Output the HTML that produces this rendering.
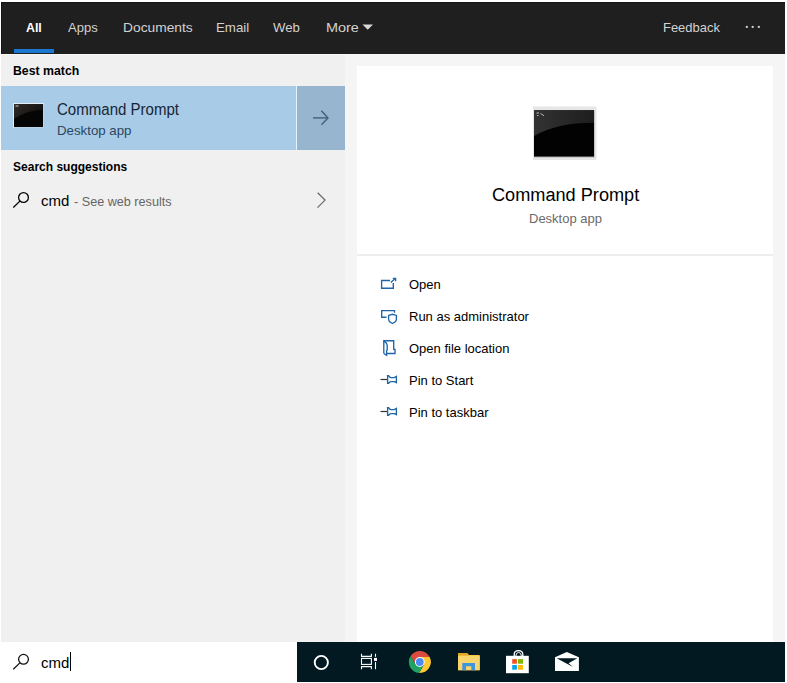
<!DOCTYPE html>
<html><head><meta charset="utf-8">
<style>
*{margin:0;padding:0;box-sizing:border-box}
html,body{width:787px;height:683px;overflow:hidden;background:#fff;font-family:"Liberation Sans",sans-serif}
.abs{position:absolute}
.t{position:absolute;white-space:nowrap;line-height:1;transform-origin:0 0}
.tab{font-size:13px;color:#d2d2d2}
</style></head><body>
<div class="abs" style="left:1px;top:2px;width:784px;height:52px;background:#1f1f1f"></div>
<div class="abs" style="left:1px;top:2px;width:784px;height:1px;background:#141414"></div>
<div class="abs" style="left:1px;top:2px;width:1px;height:52px;background:#141414"></div>
<div class="t tab" style="left:26px;top:21px;color:#fff;font-weight:bold;transform:scaleX(0.95)">All</div>
<div class="abs" style="left:13.5px;top:49px;width:40.5px;height:4px;background:#1a78d0"></div>
<div class="t tab" style="left:68px;top:21px;transform:scaleX(1.002)">Apps</div>
<div class="t tab" style="left:123px;top:21px;transform:scaleX(1.061)">Documents</div>
<div class="t tab" style="left:216px;top:21px;transform:scaleX(1.023)">Email</div>
<div class="t tab" style="left:273px;top:21px;transform:scaleX(1.012)">Web</div>
<div class="t tab" style="left:326px;top:21px;transform:scaleX(1.109)">More</div>
<div class="t tab" style="left:663px;top:21px;transform:scaleX(0.996)">Feedback</div>

<div class="abs" style="left:1px;top:54px;width:344px;height:588px;background:#f0f0f0"></div>
<div class="abs" style="left:345px;top:54px;width:440px;height:588px;background:#f5f5f5"></div>
<div class="abs" style="left:1px;top:54px;width:784px;height:1px;background:#f8f8f8"></div>
<div class="abs" style="left:357px;top:66px;width:416px;height:576px;background:#fff"></div>
<div class="abs" style="left:357px;top:254px;width:416px;height:2px;background:#ededed"></div>
<div class="abs" style="left:1px;top:86px;width:295px;height:64px;background:#a8cbe7"></div>
<div class="abs" style="left:296px;top:86px;width:1px;height:64px;background:#e6f3fc"></div>
<div class="abs" style="left:297px;top:86px;width:48px;height:64px;background:#97b5cf"></div>

<div class="t" style="left:13px;top:64px;font-size:13.5px;font-weight:bold;color:#000;transform:scaleX(0.91)">Best match</div>
<div class="t" style="left:57px;top:102px;font-size:16px;color:#172636;transform:scaleX(0.94)">Command Prompt</div>
<div class="t" style="left:57px;top:124px;font-size:13px;color:#2c4760;transform:scaleX(1.02)">Desktop app</div>
<div class="t" style="left:13px;top:160px;font-size:13.5px;font-weight:bold;color:#000;transform:scaleX(0.89)">Search suggestions</div>
<div class="t" style="left:41px;top:193px;font-size:15px;color:#000">cmd</div>
<div class="t" style="left:74px;top:196px;font-size:12.5px;color:#666;transform:scaleX(1.01)">- See web results</div>

<div class="t" style="left:492px;top:186px;font-size:18px;color:#000;transform:scaleX(1.008)">Command Prompt</div>
<div class="t" style="left:529px;top:212px;font-size:13px;color:#6a6a6a">Desktop app</div>

<div class="t" style="left:409px;top:278px;font-size:13px;color:#000">Open</div>
<div class="t" style="left:409px;top:310px;font-size:13px;color:#000">Run as administrator</div>
<div class="t" style="left:409px;top:342px;font-size:13px;color:#000">Open file location</div>
<div class="t" style="left:409px;top:374px;font-size:13px;color:#000">Pin to Start</div>
<div class="t" style="left:409px;top:406px;font-size:13px;color:#000">Pin to taskbar</div>

<div class="abs" style="left:1px;top:642px;width:296px;height:40px;background:#fff"></div>
<div class="t" style="left:41px;top:655px;font-size:15px;color:#000">cmd</div>
<div class="abs" style="left:70px;top:652px;width:1px;height:19px;background:#000"></div>
<div class="abs" style="left:297px;top:642px;width:488px;height:40px;background:#021922"></div>

<svg class="abs" style="left:0;top:0" width="787" height="683" viewBox="0 0 787 683">
  <!-- More triangle -->
  <path d="M362.5,24.5 L373,24.5 L367.75,29.8 Z" fill="#d8d8d8"/>
  <!-- dots -->
  <g fill="#d0d0d0"><rect x="745.8" y="25.9" width="2" height="2"/><rect x="751.7" y="25.9" width="2" height="2"/><rect x="757.8" y="25.9" width="2" height="2"/></g>

  <!-- small cmd icon -->
  <rect x="13" y="103" width="31" height="25" fill="#bcd3e6"/><rect x="13" y="103" width="31" height="1" fill="#e4eef6"/><rect x="13" y="103" width="1" height="25" fill="#e4eef6"/>
  <defs>
    <linearGradient id="cg" x1="0" y1="0" x2="1" y2="0.6">
      <stop offset="0" stop-color="#3a3633"/><stop offset="1" stop-color="#141210"/>
    </linearGradient>
  </defs>
  <rect x="14" y="104" width="29" height="23" fill="#050505"/>
  <path d="M14,104 H43 V110 Q27,110 14,119 Z" fill="url(#cg)" opacity="0.8"/>
  <rect x="15.5" y="105.5" width="3" height="1" fill="#ccc"/>

  <!-- arrow -->
  <g stroke="#465f78" stroke-width="1.4" fill="none">
    <path d="M313,117.9 H327.5"/>
    <path d="M321.4,110.8 L328,117.9 L321.4,124.8"/>
  </g>
  <!-- chevron -->
  <path d="M317.7,192.8 L325,200.1 L317.5,207.6" stroke="#6a6a6a" stroke-width="1.3" fill="none"/>

  <!-- search icon suggestion -->
  <g stroke="#000" stroke-width="1.3" fill="none">
    <circle cx="23.5" cy="197.5" r="4.9"/>
    <path d="M19.9,201.1 L13.3,207.5"/>
  </g>
  <!-- search icon box -->
  <g stroke="#111" stroke-width="1.3" fill="none">
    <circle cx="23.5" cy="659.3" r="4.9"/>
    <path d="M19.9,662.9 L13.3,669.3"/>
  </g>

  <!-- big cmd icon -->
  <rect x="533" y="106.5" width="63.5" height="53.5" fill="#e6e6e6"/>
  <rect x="534" y="110.3" width="61" height="47.5" fill="#c6c6c6"/>
  <rect x="534" y="110.3" width="60" height="46.3" fill="#020202"/>
  <defs>
    <linearGradient id="cg2" x1="0" y1="0" x2="1" y2="0">
      <stop offset="0" stop-color="#323232"/><stop offset="1" stop-color="#1e1e1e"/>
    </linearGradient>
  </defs>
  <path d="M534,110.3 H594 V122.8 Q558,122.5 534,136 Z" fill="url(#cg2)"/>
  <path d="M536.5,113 h2.5 M537,115.5 h1.5 M540.5,113.5 l3.5,2.2" stroke="#b8b8b8" stroke-width="1" fill="none"/>
  <!-- action icons -->
  <g stroke="#1f65a8" stroke-width="1.35" fill="none">
    <path d="M390,280.5 H381.6 V288.2 H393.3 V283"/>
    <path d="M390.8,282.6 L395.5,278.3"/>
    <path d="M392.8,278.4 H395.6 V281.2"/>

    <path d="M386.5,317.2 H381.7 V310.6 H394.5 V312.8"/>
    <path d="M388.6,315.4 L392.5,314.3 L396.4,315.4 V319 Q396.4,321.8 392.5,323.5 Q388.6,321.8 388.6,319 Z"/>

    <path d="M383.8,353.5 V340.7 H393.7 V349.4 H395 V353.5 H386.6"/>
    <path d="M383.8,340.9 Q387.2,343 387.2,346 V349.8 Q386.2,351 386.6,352.5 V355.3 L383.8,353.5"/>

    <path d="M387.6,375.6 H388.6 Q389.6,377.4 391,377.6 H394.3 L396.4,376.4 V382.7 L394.3,381.6 H391 Q389.6,381.8 388.6,383.3 H387.6 Z"/>
    <path d="M387.6,407.6 H388.6 Q389.6,409.4 391,409.6 H394.3 L396.4,408.4 V414.7 L394.3,413.6 H391 Q389.6,413.8 388.6,415.3 H387.6 Z"/>
  </g>
  <g stroke="#333" stroke-width="1.2">
    <path d="M380.5,379.5 H387"/>
    <path d="M380.5,411.5 H387"/>
  </g>

  <!-- cortana -->
  <circle cx="321.3" cy="662.5" r="6.6" stroke="#fff" stroke-width="1.9" fill="none"/>
  <!-- task view -->
  <g stroke="#fff" stroke-width="1.1" fill="none">
    <path d="M361.5,653.7 V656.4 H371.4 V653.7"/>
    <rect x="361.5" y="658.4" width="9.9" height="6"/>
    <path d="M361.5,669.2 V666.6 H371.4 V669.2"/>
    <path d="M375.5,653.7 V656.8"/>
    <path d="M375.5,662 V669.2"/>
  </g>
  <rect x="374" y="657.9" width="3" height="3" fill="#fff"/>

  <!-- chrome -->
  <g transform="translate(419.8,662)">
    <path d="M-9.16,-6.08 A11,11 0 0,1 9.85,-4.9 L0,-4.9 L-4.24,2.45 Z" fill="#dd4b3e"/>
    <path d="M9.85,-4.9 A11,11 0 0,1 -0.68,10.98 L4.24,2.45 L0,-4.9 Z" fill="#fcc934"/>
    <path d="M-0.68,10.98 A11,11 0 0,1 -9.16,-6.08 L-4.24,2.45 L4.24,2.45 Z" fill="#1ea362"/>
    <circle r="4.9" fill="#fff"/>
    <circle r="3.9" fill="#4c8bf5"/>
  </g>
  <!-- folder -->
  <path d="M458,653 H467 L469,655 H479.7 V670.2 H458 Z" fill="#f6c84a"/>
  <rect x="458" y="656" width="21.7" height="14.2" fill="#f8d46c"/>
  <path d="M458,653 H467 L469,655.5 H458 Z" fill="#e2a52a"/>
  <path d="M462.3,670.2 V663.1 H475 V670.2 H471.3 V666.2 H466 V670.2 Z" fill="#3d95dc"/>

  <!-- store -->
  <path d="M514.2,656.5 V654.5 Q514.2,650.6 518.5,650.6 Q522.8,650.6 522.8,654.5 V656.5" stroke="#fff" stroke-width="1.3" fill="none"/><path d="M515.8,656 Q516,652.6 518.6,652.3 Q521.2,652.6 521.4,656" stroke="#fff" stroke-width="1" fill="none"/>
  <rect x="506" y="655.8" width="22.8" height="17.4" fill="#fff"/>
  <rect x="512.2" y="659.1" width="4.7" height="4.6" fill="#f25022"/>
  <rect x="518" y="659.1" width="5" height="4.6" fill="#7fba00"/>
  <rect x="512.2" y="665" width="4.7" height="4.7" fill="#00a4ef"/>
  <rect x="518" y="665" width="5" height="4.7" fill="#ffb900"/>

  <!-- mail -->
  <path d="M555,657.3 L566.8,651.9 L578.9,657.3 V671.1 H555 Z" fill="#fff"/>
  <path d="M556.7,658.3 H577.3 L568.6,663.3 L573,666.9 Z" fill="#021922"/>
</svg>
</body></html>
